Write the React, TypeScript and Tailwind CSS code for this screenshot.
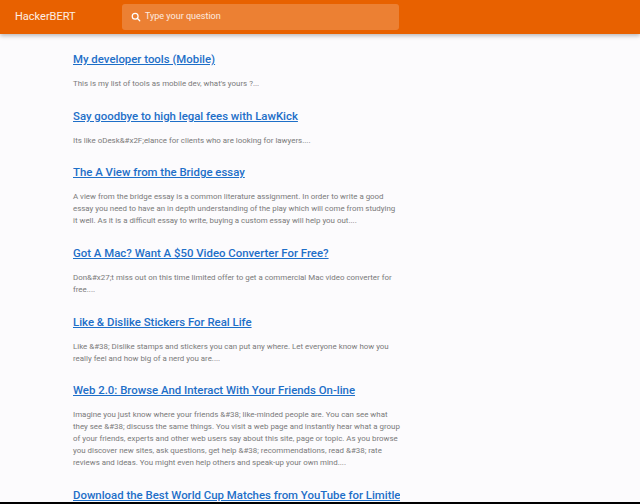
import React from 'react';

interface Post {
  title: string;
  body: string;
}

const posts: Post[] = [
  { title: 'My developer tools (Mobile)', body: "This is my list of tools as mobile dev, what's yours ?..." },
  { title: 'Say goodbye to high legal fees with LawKick', body: 'Its like oDesk&#x2F;elance for clients who are looking for lawyers....' },
  {
    title: 'The A View from the Bridge essay',
    body: 'A view from the bridge essay is a common literature assignment. In order to write a good essay you need to have an in depth understanding of the play which will come from studying it well. As it is a difficult essay to write, buying a custom essay will help you out....',
  },
  {
    title: 'Got A Mac? Want A $50 Video Converter For Free?',
    body: 'Don&#x27;t miss out on this time limited offer to get a commercial Mac video converter for free....',
  },
  {
    title: 'Like & Dislike Stickers For Real Life',
    body: 'Like &#38; Dislike stamps and stickers you can put any where. Let everyone know how you really feel and how big of a nerd you are....',
  },
  {
    title: 'Web 2.0: Browse And Interact With Your Friends On-line',
    body: 'Imagine you just know where your friends &#38; like-minded people are. You can see what they see &#38; discuss the same things. You visit a web page and instantly hear what a group of your friends, experts and other web users say about this site, page or topic. As you browse you discover new sites, ask questions, get help &#38; recommendations, read &#38; rate reviews and ideas. You might even help others and speak-up your own mind....',
  },
  {
    title: 'Download the Best World Cup Matches from YouTube for Limitless Fun',
    body: 'Watch the greatest matches again....',
  },
];

export default function App() {
  return (
    <div className="h-[504px] overflow-hidden bg-[#fcfbfd] font-['Roboto',sans-serif]">
      <header className="h-[34px] bg-[#e86100] flex items-center shadow-[0_2px_4px_rgba(0,0,0,0.25)]">
        <div className="pl-[15px] w-[122px] text-[11px] text-white/90">HackerBERT</div>
        <div className="w-[277px] h-[26px] rounded-[3px] bg-white/20 flex items-center pl-[9px] gap-[4px]">
          <svg width="10" height="10" viewBox="0 0 24 24" fill="none" stroke="white" strokeWidth="3" strokeLinecap="round">
            <circle cx="10" cy="10" r="7" />
            <path d="M15 15l6 6" />
          </svg>
          <span className="text-[9px] text-white/85">Type your question</span>
        </div>
      </header>

      <main className="ml-[73px] w-[327px] pt-[15px]">
        {posts.map((post) => (
          <div key={post.title} className="mb-[15.7px]">
            <a href="#" className="block whitespace-nowrap overflow-hidden text-[11.4px] leading-[20px] font-medium text-[#1e6fc8] underline">
              {post.title}
            </a>
            <p className="mt-[9px] text-[7.92px] leading-[12px] text-[#7a7a7a]">{post.body}</p>
          </div>
        ))}
      </main>
      <div className="fixed bottom-0 left-0 right-0 h-[2px] bg-black" />
    </div>
  );
}
